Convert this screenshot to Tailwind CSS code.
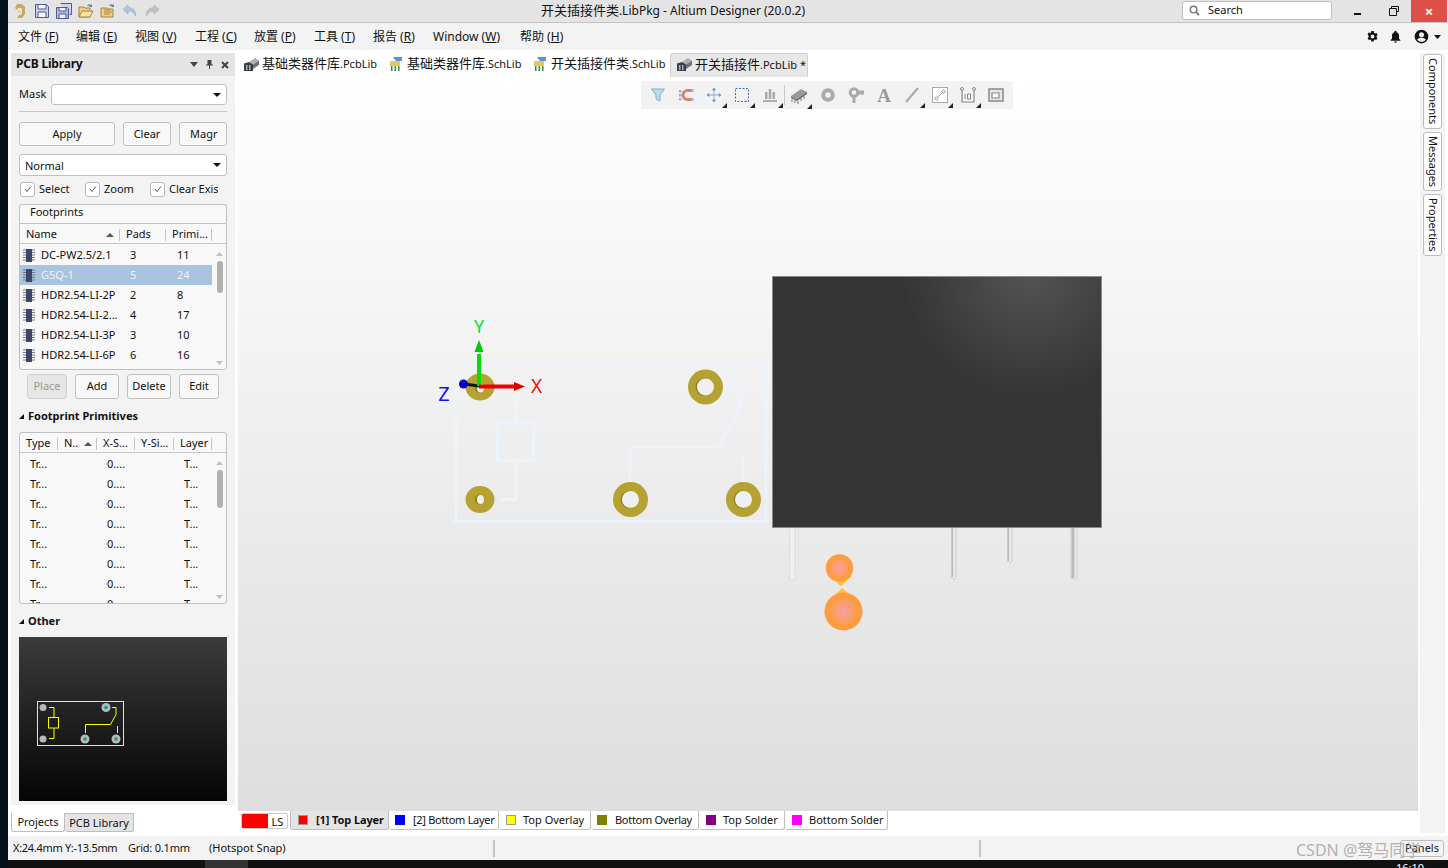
<!DOCTYPE html>
<html lang="en">
<head>
<meta charset="UTF-8">
<title>Altium Designer</title>
<script src="https://cdn.jsdelivr.net/npm/@tailwindcss/browser@4"></script>
</head>
<body class="flex h-[868px] w-[1448px] overflow-hidden bg-white text-[11px] text-[#111] font-['Noto_Sans','Noto_Sans_CJK_SC',sans-serif]">

<!-- dark strip -->
<div class="w-2 shrink-0 bg-[#04101c]"></div>

<div class="flex w-[1440px] flex-col">

  <!-- Title bar -->
  <div class="flex h-[23px] shrink-0 items-center border-b border-[#c4c4c4] bg-[#e4e4e4]">
    <div class="flex w-[200px] items-center gap-[6px] pl-1">
      <svg class="h-4 w-4" viewBox="0 0 16 16"><path d="M5 1h5l3 3v7l-3 4H5l2-3h2l1-2V6L9 5H6L5 7 3 5z" fill="#c9a765"/><path d="M6 7h3v3H6z" fill="#e6d6a8"/></svg>
      <svg class="h-4 w-4" viewBox="0 0 16 16"><path d="M1.500 1.500h11l2 2v11h-13z" fill="#cdd2e6" stroke="#4d5a94"/><path d="M4 2v4h8V2M4 14V9h8v5" fill="#f7f8fb" stroke="#4d5a94"/></svg>
      <svg class="h-4 w-4" viewBox="0 0 16 16"><path d="M4.500.5h11v11h-2" fill="#cfd4e6" stroke="#4d5a94"/><path d="M.5 4.500h11l1 1v10H.5z" fill="#b4bbd8" stroke="#4d5a94"/><path d="M3 5v3h7V5M3 15v-4h7v4" fill="#eef0f6" stroke="#4d5a94"/></svg>
      <svg class="h-4 w-4" viewBox="0 0 16 16"><path d="M1 4h5l1 1h5v9H1z" fill="#f0cf85" stroke="#a8843c"/><path d="M1 14l3-6h11l-3 6z" fill="#f8e2a8" stroke="#a8843c"/><path d="M9 3c1-2 3-2 4-1l1-1v3h-3l1-1c-1-.5-2-.5-3 0z" fill="#5b7fb5"/></svg>
      <svg class="h-4 w-4" viewBox="0 0 16 16"><path d="M1 5h6l1 1h5v8H1z" fill="#f0cf85" stroke="#a8843c"/><path d="M4 7h6M4 9h8M4 11h6" stroke="#a8843c"/><path d="M9 3c1-2 3-2 4-1l1-1v3h-3l1-1c-1-.5-2-.5-3 0z" fill="#5b7fb5"/></svg>
      <svg class="h-4 w-4" viewBox="0 0 16 16"><path d="M6 2L1 6.500 6 11V8c3 0 6 1 7.500 5 .5-5-2-8-7.500-8.500z" fill="#b4c6de" stroke="#8ba3c4" stroke-width=".6"/></svg>
      <svg class="h-4 w-4" viewBox="0 0 16 16"><path d="M10 2l5 4.500L10 11V8c-3 0-6 1-7.500 5C2 8 4.500 5 10 4.500z" fill="#c2c2c2" stroke="#a8a8a8" stroke-width=".6"/></svg>
    </div>
    <div class="ml-[330px] w-[270px] text-center text-[12px] whitespace-nowrap"><span class="text-[13px]">开关插接件类</span>.LibPkg - Altium Designer (20.0.2)</div>
    <div class="mb-[2px] ml-[374px] flex h-[19px] w-[150px] items-center rounded-[3px] border border-[#c0c0c0] bg-white pl-[6px]">
      <svg class="h-[11px] w-[11px]" viewBox="0 0 12 12"><circle cx="5" cy="5" r="3.600" fill="none" stroke="#777" stroke-width="1.600"/><path d="M8 8l3 3" stroke="#777" stroke-width="2"/></svg>
      <span class="ml-[8px]">Search</span>
    </div>
    <div class="flex h-full flex-1 items-center">
      <div class="ml-[22px] h-[2px] w-[7px] translate-y-[3px] bg-[#111]"></div>
      <svg class="ml-[28px] h-[10px] w-[10px]" viewBox="0 0 10 10"><path d="M2.500 2.500V.5h7v5h-2M.5 2.500h7v7h-7z" fill="none" stroke="#111"/></svg>
      <div class="ml-[12px] flex h-full w-9 items-center justify-center bg-[#e04f47] text-[15px] font-bold leading-none text-white">×</div>
    </div>
  </div>

  <!-- Menu bar -->
  <div class="flex h-[27px] shrink-0 items-center gap-[15px] bg-[#f3f3f3] pl-[10px] text-[12px] whitespace-nowrap">
    <span class="w-[43px]">文件 (<u>F</u>)</span>
    <span class="w-[44px]">编辑 (<u>E</u>)</span>
    <span class="w-[45px]">视图 (<u>V</u>)</span>
    <span class="w-[44px]">工程 (<u>C</u>)</span>
    <span class="w-[45px]">放置 (<u>P</u>)</span>
    <span class="w-[44px]">工具 (<u>T</u>)</span>
    <span class="w-[45px]">报告 (<u>R</u>)</span>
    <span class="w-[72px]">Window (<u>W</u>)</span>
    <span>帮助 (<u>H</u>)</span>
    <div class="ml-auto mr-[7px] flex items-center gap-[10px]">
      <svg class="h-[13px] w-[13px]" viewBox="0 0 24 24"><path fill="#111" d="M19.400 13a7.500 7.500 0 0 0 0-2l2.200-1.700-2.200-3.800-2.600 1a7.600 7.600 0 0 0-1.700-1L14.200 2H9.800l-.4 2.500a7.600 7.600 0 0 0-1.700 1l-2.600-1-2.200 3.800L5 11a7.500 7.500 0 0 0 0 2l-2.100 1.700 2.200 3.800 2.600-1a7.600 7.600 0 0 0 1.700 1l.4 2.500h4.400l.4-2.500a7.600 7.600 0 0 0 1.700-1l2.600 1 2.200-3.800zM12 15.500a3.500 3.500 0 1 1 0-7 3.500 3.500 0 0 1 0 7z"/></svg>
      <svg class="h-[13px] w-[13px]" viewBox="0 0 24 24"><path fill="#111" d="M12 1.500a2 2 0 0 0-2 2v.6C7 5 5.500 7.500 5.500 10.500V16L3 18.500V20h18v-1.500L18.500 16v-5.500c0-3-1.500-5.500-4.500-6.400v-.6a2 2 0 0 0-2-2zM9.500 21a2.500 2.500 0 0 0 5 0z"/></svg>
      <svg class="ml-[2px] h-[15px] w-[15px]" viewBox="0 0 24 24"><path fill="#111" fill-rule="evenodd" d="M12 1a11 11 0 1 0 0 22 11 11 0 0 0 0-22zm0 4a4 4 0 1 1 0 8 4 4 0 0 1 0-8zm0 15.500c-3 0-5.500-1.500-7-3.700 1.500-1.800 4.500-2.800 7-2.800s5.500 1 7 2.800c-1.500 2.200-4 3.700-7 3.700z"/></svg>
      <svg class="-ml-[5px] h-[4px] w-[7px]" viewBox="0 0 7 4"><path d="M0 0h7L3.500 4z" fill="#111"/></svg>
    </div>
  </div>

  <!-- Main -->
  <div class="flex h-[786px] shrink-0 bg-white">

    <!-- Left column -->
    <div class="flex w-[230px] shrink-0 flex-col pl-[3px] pt-[3px]">
      <div class="flex h-[752px] w-[224px] flex-col bg-[#f3f3f3]">
        <div class="flex h-[23px] shrink-0 items-center bg-[#e4e4e4] pl-[5px] pr-[6px]">
          <span class="pb-px text-[12px] font-bold tracking-[-.2px]">PCB Library</span>
          <svg class="ml-auto h-[5px] w-2" viewBox="0 0 8 5"><path d="M0 0h8L4 5z" fill="#444"/></svg>
          <svg class="ml-[8px] h-[9px] w-[7px]" viewBox="0 0 7 9"><path d="M1.500 0h4v4.500h1.500v1H4V9H3V5.500H0v-1h1.500z" fill="#444"/></svg>
          <svg class="ml-[8px] h-2 w-2" viewBox="0 0 8 8"><path d="M1 1l6 6M7 1L1 7" stroke="#444" stroke-width="2"/></svg>
        </div>

        <div class="flex flex-col px-2">
          <div class="mt-2 flex h-[21px] items-center">
            <span class="w-[32px]">Mask</span>
            <div class="flex h-full flex-1 items-center justify-end rounded-[3px] border border-[#c0c0c0] bg-white pr-[5px]">
              <svg class="h-[4px] w-2" viewBox="0 0 8 4"><path d="M0 0h8L4 4z" fill="#111"/></svg>
            </div>
          </div>
          <div class="mt-[6px] h-px bg-[#c8c8c8]"></div>
          <div class="mt-[10px] flex h-[24px] gap-2">
            <button class="w-[96px] rounded-[3px] border border-[#c0c0c0] bg-[#f8f8f8]">Apply</button>
            <button class="w-[48px] rounded-[3px] border border-[#c0c0c0] bg-[#f8f8f8]">Clear</button>
            <button class="w-[48px] overflow-hidden rounded-[3px] border border-[#c0c0c0] bg-[#f8f8f8] pl-[10px] text-left whitespace-nowrap">Magr</button>
          </div>
          <div class="mt-2 flex h-[22px] items-center justify-between rounded-[3px] border border-[#c0c0c0] bg-white pl-[5px] pr-[5px] pt-[2px]">
            <span>Normal</span>
            <svg class="h-[4px] w-2 -translate-y-px" viewBox="0 0 8 4"><path d="M0 0h8L4 4z" fill="#111"/></svg>
          </div>
          <div class="mt-[5px] flex h-4 items-center">
            <div class="ml-px flex h-[15px] w-[15px] items-center justify-center rounded-[3px] border border-[#b8b8b8] bg-white">
              <svg class="h-2 w-2" viewBox="0 0 8 8"><path d="M1 4l2 2.500L7 1.500" fill="none" stroke="#555"/></svg>
            </div>
            <span class="ml-[4px] w-[46px]">Select</span>
            <div class="flex h-[15px] w-[15px] items-center justify-center rounded-[3px] border border-[#b8b8b8] bg-white">
              <svg class="h-2 w-2" viewBox="0 0 8 8"><path d="M1 4l2 2.500L7 1.500" fill="none" stroke="#555"/></svg>
            </div>
            <span class="ml-[4px] w-[46px]">Zoom</span>
            <div class="flex h-[15px] w-[15px] items-center justify-center rounded-[3px] border border-[#b8b8b8] bg-white">
              <svg class="h-2 w-2" viewBox="0 0 8 8"><path d="M1 4l2 2.500L7 1.500" fill="none" stroke="#555"/></svg>
            </div>
            <span class="ml-[4px] w-[49px] overflow-hidden whitespace-nowrap">Clear Existing</span>
          </div>

          <!-- Footprints -->
          <div class="mt-[7px] flex h-[19px] items-center rounded-t-[3px] border border-b-0 border-[#c0c0c0] bg-[#f8f8f8] pb-[3px] pl-[10px]">Footprints</div>
          <div class="relative h-[147px] overflow-hidden rounded-b-[3px] border border-[#c0c0c0] bg-[#f8f8f8]">
            <div class="flex h-[20px] items-center border-b border-[#c8c8c8] pt-[2px]">
              <span class="ml-[6px] w-[80px]">Name</span>
              <svg class="h-[4px] w-2" viewBox="0 0 8 4"><path d="M0 4h8L4 0z" fill="#555"/></svg>
              <span class="ml-[5px] h-[12px] w-px bg-[#c4c4c4]"></span>
              <span class="ml-[6px] w-[39px]">Pads</span>
              <span class="h-[12px] w-px bg-[#c4c4c4]"></span>
              <span class="ml-[6px] w-[39px]">Primi...</span>
              <span class="h-[12px] w-px bg-[#c4c4c4]"></span>
            </div>
            <div class="flex flex-col pt-[1px]">
              <div class="flex h-[20px] w-[192px] items-center"><svg class="ml-[3px] h-[13px] w-[12px]" viewBox="0 0 12 13"><path d="M0 1h12M0 3.500h12M0 6h12M0 8.500h12M0 11h12" stroke="#778" stroke-width="1"/><rect x="3" y="0" width="6" height="13" fill="#3b4768"/></svg><span class="ml-[6px] w-[89px]">DC-PW2.5/2.1</span><span class="w-[47px]">3</span><span>11</span></div>
              <div class="flex h-[20px] w-[192px] items-center bg-[#a9c4e0] text-[#eef3f8]"><svg class="ml-[3px] h-[13px] w-[12px]" viewBox="0 0 12 13"><path d="M0 1h12M0 3.500h12M0 6h12M0 8.500h12M0 11h12" stroke="#778" stroke-width="1"/><rect x="3" y="0" width="6" height="13" fill="#3b4768"/></svg><span class="ml-[6px] w-[89px]">G5Q-1</span><span class="w-[47px]">5</span><span>24</span></div>
              <div class="flex h-[20px] w-[192px] items-center"><svg class="ml-[3px] h-[13px] w-[12px]" viewBox="0 0 12 13"><path d="M0 1h12M0 3.500h12M0 6h12M0 8.500h12M0 11h12" stroke="#778" stroke-width="1"/><rect x="3" y="0" width="6" height="13" fill="#3b4768"/></svg><span class="ml-[6px] w-[89px]">HDR2.54-LI-2P</span><span class="w-[47px]">2</span><span>8</span></div>
              <div class="flex h-[20px] w-[192px] items-center"><svg class="ml-[3px] h-[13px] w-[12px]" viewBox="0 0 12 13"><path d="M0 1h12M0 3.500h12M0 6h12M0 8.500h12M0 11h12" stroke="#778" stroke-width="1"/><rect x="3" y="0" width="6" height="13" fill="#3b4768"/></svg><span class="ml-[6px] w-[89px]">HDR2.54-LI-2...</span><span class="w-[47px]">4</span><span>17</span></div>
              <div class="flex h-[20px] w-[192px] items-center"><svg class="ml-[3px] h-[13px] w-[12px]" viewBox="0 0 12 13"><path d="M0 1h12M0 3.500h12M0 6h12M0 8.500h12M0 11h12" stroke="#778" stroke-width="1"/><rect x="3" y="0" width="6" height="13" fill="#3b4768"/></svg><span class="ml-[6px] w-[89px]">HDR2.54-LI-3P</span><span class="w-[47px]">3</span><span>10</span></div>
              <div class="flex h-[20px] w-[192px] items-center"><svg class="ml-[3px] h-[13px] w-[12px]" viewBox="0 0 12 13"><path d="M0 1h12M0 3.500h12M0 6h12M0 8.500h12M0 11h12" stroke="#778" stroke-width="1"/><rect x="3" y="0" width="6" height="13" fill="#3b4768"/></svg><span class="ml-[6px] w-[89px]">HDR2.54-LI-6P</span><span class="w-[47px]">6</span><span>16</span></div>
            </div>
            <!-- scrollbar -->
            <div class="absolute right-0 top-[21px] flex h-[124px] w-[13px] flex-col items-center">
              <svg class="mt-[7px] h-[4px] w-[7px]" viewBox="0 0 7 4"><path d="M0 4h7L3.500 0z" fill="#c0c0c0"/></svg>
              <div class="mt-[5px] h-[32px] w-[6px] rounded-[3px] bg-[#b0b0b0]"></div>
              <svg class="mt-auto mb-[4px] h-[4px] w-[7px]" viewBox="0 0 7 4"><path d="M0 0h7L3.500 4z" fill="#c0c0c0"/></svg>
            </div>
          </div>

          <div class="mt-[4px] flex h-[25px] gap-2 pl-2">
            <button class="w-[40px] rounded-[3px] border border-[#d0d0d0] bg-[#e6e6e6] text-[#999]">Place</button>
            <button class="w-[44px] rounded-[3px] border border-[#c0c0c0] bg-[#f8f8f8]">Add</button>
            <button class="w-[44px] rounded-[3px] border border-[#c0c0c0] bg-[#f8f8f8]">Delete</button>
            <button class="w-[40px] rounded-[3px] border border-[#c0c0c0] bg-[#f8f8f8]">Edit</button>
          </div>

          <div class="mt-[9px] flex h-[16px] items-center font-bold">
            <svg class="h-[5px] w-[5px]" viewBox="0 0 5 5"><path d="M5 0v5H0z" fill="#111"/></svg>
            <span class="ml-[4px]">Footprint Primitives</span>
          </div>

          <!-- Primitives -->
          <div class="relative mt-[8px] h-[172px] overflow-hidden rounded-[3px] border border-[#c0c0c0] bg-[#f8f8f8]">
            <div class="flex h-[20px] items-center border-b border-[#c8c8c8] pt-[2px]">
              <span class="ml-[6px] w-[31px]">Type</span>
              <span class="h-[12px] w-px bg-[#c4c4c4]"></span>
              <span class="ml-[6px] w-[18px]">N..</span>
              <svg class="ml-[2px] h-[4px] w-2" viewBox="0 0 8 4"><path d="M0 4h8L4 0z" fill="#555"/></svg>
              <span class="ml-[4px] h-[12px] w-px bg-[#c4c4c4]"></span>
              <span class="ml-[6px] w-[31px]">X-S...</span>
              <span class="h-[12px] w-px bg-[#c4c4c4]"></span>
              <span class="ml-[6px] w-[32px]">Y-Si...</span>
              <span class="h-[12px] w-px bg-[#c4c4c4]"></span>
              <span class="ml-[6px] w-[31px]">Layer</span>
              <span class="h-[12px] w-px bg-[#c4c4c4]"></span>
            </div>
            <div class="flex flex-col pt-[1px]">
              <div class="flex h-[20px] items-center pl-[10px]"><span class="w-[77px]">Tr...</span><span class="w-[77px]">0....</span><span>T...</span></div>
              <div class="flex h-[20px] items-center pl-[10px]"><span class="w-[77px]">Tr...</span><span class="w-[77px]">0....</span><span>T...</span></div>
              <div class="flex h-[20px] items-center pl-[10px]"><span class="w-[77px]">Tr...</span><span class="w-[77px]">0....</span><span>T...</span></div>
              <div class="flex h-[20px] items-center pl-[10px]"><span class="w-[77px]">Tr...</span><span class="w-[77px]">0....</span><span>T...</span></div>
              <div class="flex h-[20px] items-center pl-[10px]"><span class="w-[77px]">Tr...</span><span class="w-[77px]">0....</span><span>T...</span></div>
              <div class="flex h-[20px] items-center pl-[10px]"><span class="w-[77px]">Tr...</span><span class="w-[77px]">0....</span><span>T...</span></div>
              <div class="flex h-[20px] items-center pl-[10px]"><span class="w-[77px]">Tr...</span><span class="w-[77px]">0....</span><span>T...</span></div>
              <div class="flex h-[20px] items-center pl-[10px]"><span class="w-[77px]">Tr...</span><span class="w-[77px]">0....</span><span>T...</span></div>
            </div>
            <div class="absolute right-0 top-[21px] flex h-[149px] w-[13px] flex-col items-center">
              <svg class="mt-[7px] h-[4px] w-[7px]" viewBox="0 0 7 4"><path d="M0 4h7L3.500 0z" fill="#c0c0c0"/></svg>
              <div class="mt-[5px] h-[38px] w-[6px] rounded-[3px] bg-[#b0b0b0]"></div>
              <svg class="mt-auto mb-[4px] h-[4px] w-[7px]" viewBox="0 0 7 4"><path d="M0 0h7L3.500 4z" fill="#c0c0c0"/></svg>
            </div>
          </div>

          <div class="mt-[9px] flex h-[16px] items-center font-bold">
            <svg class="h-[5px] w-[5px]" viewBox="0 0 5 5"><path d="M5 0v5H0z" fill="#111"/></svg>
            <span class="ml-[4px]">Other</span>
          </div>

          <!-- Preview -->
          <svg class="mt-[8px] h-[164px] w-[208px]" viewBox="19 637 208 164">
            <defs><linearGradient id="pv" x1="0" y1="0" x2="0" y2="1"><stop offset="0" stop-color="#3b3b3b"/><stop offset="1" stop-color="#050505"/></linearGradient></defs>
            <rect x="19" y="637" width="208" height="164" fill="url(#pv)"/>
            <g fill="none" stroke="#ffff00" stroke-width="1">
              <rect x="37.500" y="701.500" width="86" height="44"/>
              <path d="M49 707.500h5v10M54 728v10.500h-5M112 707.500h4v7l-5.500 10H85.500v8.500M117.500 726v7"/>
              <rect x="48.500" y="717.500" width="10" height="10.500"/>
            </g>
            <g fill="#b8b8b8">
              <circle cx="43" cy="707.500" r="3.500"/><circle cx="43" cy="739" r="3.500"/>
              <circle cx="106" cy="707.500" r="4.500"/><circle cx="85" cy="739" r="4.500"/><circle cx="116" cy="739" r="4.500"/>
            </g>
            <g fill="#0a9a96"><circle cx="106" cy="707.500" r="1.800"/><circle cx="85" cy="739" r="1.800"/><circle cx="116" cy="739" r="1.800"/></g>
          </svg>
        </div>
      </div>

      <!-- Panel tabs -->
      <div class="mt-2 flex h-[19px]">
        <div class="flex w-[54px] items-center justify-center rounded-b-[3px] border border-[#bdbdbd] border-t-0 bg-white pt-[1px]">Projects</div>
        <div class="flex w-[69px] items-center justify-center rounded-b-[3px] border border-[#bdbdbd] border-l-0 bg-[#e4e4e4] pt-[1px]">PCB Library</div>
      </div>
    </div>

    <!-- Centre -->
    <div class="flex w-[1180px] shrink-0 flex-col">
      <!-- Document tabs -->
      <div class="flex h-[27px] shrink-0 items-end text-[13px] whitespace-nowrap">
        <div class="flex h-[24px] w-[145px] items-center pl-[5px] pb-[2px]">
          <svg class="h-[17px] w-[17px]" viewBox="0 0 17 17"><path d="M6 6l6-4 4 2.500-6 4z" fill="#aab3bd"/><path d="M10 8.500V13l6-4V4.500z" fill="#6b7580"/><path d="M1 7.500l5-1.500 4 2.500V15H1z" fill="#383f48"/><path d="M3 9h1.500v5H3zM6 9h1.500v5H6z" fill="#a8b0b8"/></svg>
          <span class="ml-[2px]">基础类器件库<span class="text-[11px]">.PcbLib</span></span>
        </div>
        <div class="flex h-[24px] w-[144px] items-center pl-[4px] pb-[2px]">
          <svg class="h-[17px] w-[17px]" viewBox="0 0 17 17"><path d="M6 1h9v4H9z" fill="#5d93d0"/><path d="M3 5h10v5H3z" fill="#e3c765"/><path d="M4 10h1.500v5H4zM7.500 10H9v5H7.500zM11 10h1.500v5H11z" fill="#3c8a3c"/></svg>
          <span class="ml-[3px]">基础类器件库<span class="text-[11px]">.SchLib</span></span>
        </div>
        <div class="flex h-[24px] w-[143px] items-center pl-[4px] pb-[2px]">
          <svg class="h-[17px] w-[17px]" viewBox="0 0 17 17"><path d="M6 1h9v4H9z" fill="#5d93d0"/><path d="M3 5h10v5H3z" fill="#e3c765"/><path d="M4 10h1.500v5H4zM7.500 10H9v5H7.500zM11 10h1.500v5H11z" fill="#3c8a3c"/></svg>
          <span class="ml-[3px]">开关插接件类<span class="text-[11px]">.SchLib</span></span>
        </div>
        <div class="flex h-[24px] w-[138px] items-center rounded-t-[3px] border border-b-0 border-[#d0d0d0] bg-[#e8e8e8] pl-[5px] pb-[2px]">
          <svg class="h-[17px] w-[17px]" viewBox="0 0 17 17"><path d="M6 6l6-4 4 2.500-6 4z" fill="#aab3bd"/><path d="M10 8.500V13l6-4V4.500z" fill="#6b7580"/><path d="M1 7.500l5-1.500 4 2.500V15H1z" fill="#383f48"/><path d="M3 9h1.500v5H3zM6 9h1.500v5H6z" fill="#a8b0b8"/></svg>
          <span class="ml-[2px]">开关插接件<span class="text-[11px]">.PcbLib *</span></span>
        </div>
      </div>

      <!-- 3D view -->
      <div class="relative h-[734px] shrink-0 bg-gradient-to-b from-white to-[#dedede]">
        <svg class="absolute inset-0 h-[734px] w-[1180px]" viewBox="238 77 1180 734">
          <defs>
            <radialGradient id="glow" gradientUnits="userSpaceOnUse" cx="1030" cy="270" r="130">
              <stop offset="0" stop-color="#545454"/><stop offset="1" stop-color="#343434"/>
            </radialGradient>
            <radialGradient id="blob"><stop offset="0" stop-color="#f5a0ac"/><stop offset=".8" stop-color="#ff9c3e"/></radialGradient>
          </defs>
          <!-- pins -->
          <g fill="#ebebeb" stroke="#c8c8c8" stroke-width=".8">
            <path d="M789.500 527h5.500v53h-5.500zM796 527h2.500v37H796z" fill="#efefef" stroke="#dadada"/>
            <path d="M951.500 527h4.500v50l-2 3-2.500-3z"/>
            <path d="M1007.500 527h4.500v34l-2 2.500-2.500-2.500z"/>
            <path d="M1071 527h6v51l-2 2-4-2z"/>
          </g>
          <path d="M952.500 527v50M1008.500 527v34" stroke="#bdbdbd" stroke-width="1.500"/>
          <path d="M1073 527v51" stroke="#bbbbbb" stroke-width="3"/>
          <!-- relay body -->
          <rect x="772.500" y="276.500" width="329" height="251" fill="url(#glow)" stroke="#8a8a8a"/>
          <!-- board outline + overlay -->
          <g fill="none" stroke="#edf3fa" stroke-width="3">
            <rect x="456" y="364" width="310" height="157.500"/>
            <rect x="497.500" y="423.500" width="36" height="37"/>
            <path d="M516 395v28M516 461v38.500h-15M724 387h16v22l-21 38h-89v35M743 455v27"/>
          </g>
          <!-- pads -->
          <g fill="#b5a233">
            <ellipse cx="480" cy="387" rx="14.500" ry="13.500"/>
            <circle cx="705.500" cy="387" r="17.500"/>
            <ellipse cx="480" cy="499.500" rx="14.500" ry="13.500"/>
            <circle cx="630.500" cy="499.500" r="17.500"/>
            <circle cx="743.500" cy="499.500" r="17.500"/>
          </g>
          <g fill="#8f8128">
            <ellipse cx="479.500" cy="388" rx="4.500" ry="5"/>
            <ellipse cx="479.500" cy="499.500" rx="4.500" ry="5"/>
            <circle cx="704.500" cy="387" r="9"/>
            <circle cx="629.500" cy="499.500" r="9"/>
            <circle cx="742.500" cy="499.500" r="9"/>
          </g>
          <g fill="#f0f0f0">
            <ellipse cx="480.500" cy="388" rx="3.500" ry="4.500"/>
            <ellipse cx="480.500" cy="499.500" rx="3.500" ry="4.500"/>
            <circle cx="705.500" cy="387" r="8.500"/>
            <circle cx="630.500" cy="499.500" r="8.500"/>
            <circle cx="743.500" cy="499.500" r="8.500"/>
          </g>
          <!-- axes -->
          <path d="M464 384l15 2" stroke="#111" stroke-width="3"/>
          <circle cx="463.500" cy="384" r="4.500" fill="#0000c8"/>
          <path d="M479 386v-32" stroke="#00e000" stroke-width="4"/>
          <path d="M479 340l-4.500 12h9z" fill="#00c800"/>
          <path d="M479 386.500h36" stroke="#ee0000" stroke-width="4"/>
          <path d="M525 386.500l-11-4.500v9z" fill="#dd0000"/>
          <text x="479" y="333" text-anchor="middle" font-size="18" fill="#00e040">Y</text>
          <text x="536.500" y="393" text-anchor="middle" font-size="19" fill="#ee1111">X</text>
          <text x="444" y="401" text-anchor="middle" font-size="20" fill="#1111ee">Z</text>
          <!-- orange pad -->
          <path d="M830 576l11 10.500 11-10.500z" fill="#ffc23a"/>
          <path d="M830 600l12-12 14 12z" fill="#ffc23a"/>
          <circle cx="839.500" cy="568" r="13.700" fill="url(#blob)"/>
          <circle cx="843.500" cy="611.500" r="19" fill="url(#blob)"/>
        </svg>

        <!-- Toolbar -->
        <div class="absolute left-[403px] top-[4px] flex h-[28px] w-[372px] items-center rounded-[2px] bg-[#f2f2f2] pl-[3px]">
          <div class="relative flex w-[28px] justify-center"><svg class="h-4 w-4" viewBox="0 0 16 16"><path d="M1.500 2h13L10 8v6l-4-2V8z" fill="#bcdcec" stroke="#7fb0cc"/></svg></div>
          <div class="relative flex w-[28px] justify-center"><svg class="h-4 w-4" viewBox="0 0 16 16"><path d="M15 3.500H9.500a4.500 4.500 0 0 0 0 9H15" fill="none" stroke="#dd7f70" stroke-width="3"/><path d="M13 2h2.500v3H13zM13 11h2.500v3H13z" fill="#8fb5cf"/><rect x="1" y="3" width="2.500" height="2.500" fill="#8fb5cf"/><rect x="1" y="7" width="2.500" height="2.500" fill="#8fb5cf"/><rect x="1" y="11" width="2.500" height="2.500" fill="#8fb5cf"/></svg></div>
          <div class="relative flex w-[28px] justify-center"><svg class="h-4 w-4" viewBox="0 0 16 16"><path d="M8 1v14M1 8h14M8 1L6.500 3h3zM8 15l-1.500-2h3zM1 8l2-1.500v3zM15 8l-2-1.500v3z" fill="#6f9bd6" stroke="#6f9bd6" stroke-width=".8"/></svg><span class="absolute bottom-[-5px] right-[1px] h-0 w-0 border-b-[5px] border-l-[5px] border-b-[#222] border-l-transparent"></span></div>
          <div class="relative flex w-[28px] justify-center"><svg class="h-4 w-4" viewBox="0 0 16 16"><rect x="1.500" y="1.500" width="13" height="13" fill="none" stroke="#4a6fc0" stroke-dasharray="2 1.500"/></svg><span class="absolute bottom-[-5px] right-[1px] h-0 w-0 border-b-[5px] border-l-[5px] border-b-[#222] border-l-transparent"></span></div>
          <div class="relative flex w-[28px] justify-center"><svg class="h-4 w-4" viewBox="0 0 16 16"><path d="M3 5h2.500v7H3zM6.800 2h2.500v10H6.800zM10.500 5H13v7h-2.500z" fill="#a8a8a8"/><path d="M1 14h14" stroke="#999" stroke-width="1.500"/></svg><span class="absolute bottom-[-5px] right-[1px] h-0 w-0 border-b-[5px] border-l-[5px] border-b-[#222] border-l-transparent"></span></div>
          <div class="h-[20px] w-px bg-[#c8c8c8]"></div>
          <div class="relative -ml-px flex w-[30px] justify-center"><svg class="h-[18px] w-[18px]" viewBox="0 0 18 18"><path d="M1 10l10-7 6 3-10 7z" fill="#999"/><path d="M1 10l6 3v2l-6-3z" fill="#777"/><path d="M7 13l10-7v2L7 15z" fill="#666"/><path d="M2 13v3M5 14v3M8 15v3M11 12v3M14 10v3" stroke="#777"/></svg><span class="absolute bottom-[-5px] right-[2px] h-0 w-0 border-b-[5px] border-l-[5px] border-b-[#222] border-l-transparent"></span></div>
          <div class="relative flex w-[28px] justify-center"><svg class="h-4 w-4" viewBox="0 0 16 16"><circle cx="8" cy="8" r="4.800" fill="none" stroke="#aaa" stroke-width="4"/></svg></div>
          <div class="relative flex w-[28px] justify-center"><svg class="h-[18px] w-[18px]" viewBox="0 0 18 18"><circle cx="7" cy="6.500" r="3.800" fill="none" stroke="#aaa" stroke-width="3"/><path d="M11 4.500h6v4h-6zM5.500 11h3v6h-3z" fill="#aaa"/></svg></div>
          <div class="relative flex w-[28px] justify-center font-['Liberation_Serif',serif] text-[19px] font-bold leading-none text-[#999]">A</div>
          <div class="relative flex w-[28px] justify-center"><svg class="h-4 w-4" viewBox="0 0 16 16"><path d="M2 15L14 1" stroke="#aaa" stroke-width="2.200"/></svg><span class="absolute bottom-[-5px] right-[1px] h-0 w-0 border-b-[5px] border-l-[5px] border-b-[#222] border-l-transparent"></span></div>
          <div class="relative flex w-[28px] justify-center"><svg class="h-4 w-4" viewBox="0 0 16 16"><rect x=".5" y=".5" width="15" height="15" fill="#fff" stroke="#aaa"/><circle cx="4.500" cy="11.500" r="1.500" fill="none" stroke="#999"/><circle cx="11.500" cy="4.500" r="1.500" fill="none" stroke="#999"/><path d="M5.500 10.500l5-5" stroke="#999"/></svg><span class="absolute bottom-[-5px] right-[1px] h-0 w-0 border-b-[5px] border-l-[5px] border-b-[#222] border-l-transparent"></span></div>
          <div class="relative flex w-[28px] justify-center"><svg class="h-4 w-4" viewBox="0 0 16 16"><circle cx="2" cy="2" r="1.500" fill="none" stroke="#888"/><circle cx="14" cy="2" r="1.500" fill="none" stroke="#888"/><path d="M2 3.500V15h12V3.500" fill="none" stroke="#888" stroke-width="1.200"/><path d="M5 7v5M7.500 7h3v5h-3z" fill="none" stroke="#888"/></svg><span class="absolute bottom-[-5px] right-[1px] h-0 w-0 border-b-[5px] border-l-[5px] border-b-[#222] border-l-transparent"></span></div>
          <div class="relative flex w-[28px] justify-center"><svg class="h-4 w-4" viewBox="0 0 16 16"><rect x="1" y="2" width="14" height="12" fill="#e6e6e6" stroke="#888" stroke-width="1.500"/><path d="M4 11V6h7v5z" fill="#fff" stroke="#888" stroke-width="1.200"/></svg></div>
        </div>
      </div>

      <!-- Layer tabs -->
      <div class="flex h-[25px] shrink-0 items-start whitespace-nowrap">
        <div class="ml-[3px] mt-[2px] flex h-[16px] w-[47px] overflow-hidden rounded-[2px] border border-[#c8c8c8]">
          <span class="w-[26px] bg-[#ff0000]"></span><span class="flex-1 text-center leading-[15px]">LS</span>
        </div>
        <div class="ml-[2px] flex h-[19px] w-[99px] items-center rounded-b-[3px] border border-t-0 border-[#c0c0c0] bg-[#e4e4e4] pl-[7px] pt-px font-bold">
          <span class="h-[10px] w-[10px] shrink-0 -translate-y-px border border-[#999] bg-[#ff0000]"></span><span class="ml-[8px] tracking-[-.1px]">[1] Top Layer</span>
        </div>
        <div class="flex h-[19px] w-[110px] items-center rounded-b-[3px] border border-l-0 border-t-0 border-[#c0c0c0] pl-[6px] pt-px">
          <span class="h-[10px] w-[10px] shrink-0 -translate-y-px bg-[#0000ff]"></span><span class="ml-[8px] tracking-[-.3px]">[2] Bottom Layer</span>
        </div>
        <div class="flex h-[19px] w-[92px] items-center rounded-b-[3px] border border-l-0 border-t-0 border-[#c0c0c0] pl-[7px] pt-px">
          <span class="h-[10px] w-[10px] shrink-0 -translate-y-px border border-[#999] bg-[#ffff00]"></span><span class="ml-[7px]">Top Overlay</span>
        </div>
        <div class="flex h-[19px] w-[108px] items-center rounded-b-[3px] border border-l-0 border-t-0 border-[#c0c0c0] pl-[6px] pt-px">
          <span class="h-[10px] w-[10px] shrink-0 -translate-y-px bg-[#808000]"></span><span class="ml-[8px] tracking-[-.3px]">Bottom Overlay</span>
        </div>
        <div class="flex h-[19px] w-[86px] items-center rounded-b-[3px] border border-l-0 border-t-0 border-[#c0c0c0] pl-[7px] pt-px">
          <span class="h-[10px] w-[10px] shrink-0 -translate-y-px bg-[#800080]"></span><span class="ml-[7px]">Top Solder</span>
        </div>
        <div class="flex h-[19px] w-[103px] items-center rounded-b-[3px] border border-l-0 border-t-0 border-[#c0c0c0] pl-[7px] pt-px">
          <span class="h-[10px] w-[10px] shrink-0 -translate-y-px bg-[#ff00ff]"></span><span class="ml-[7px]">Bottom Solder</span>
        </div>
      </div>
    </div>

    <!-- Right strip -->
    <div class="w-[30px] shrink-0 pt-[3px] pl-[2px]">
      <div class="flex h-[780px] w-[25px] flex-col gap-[3px] bg-[#f3f3f3] pl-[3px] pt-[1px]">
        <div class="flex h-[75px] w-[19px] items-center justify-center rounded-[3px] border border-[#bdbdbd] bg-white [writing-mode:vertical-rl]">Components</div>
        <div class="flex h-[59px] w-[19px] items-center justify-center rounded-[3px] border border-[#bdbdbd] bg-white [writing-mode:vertical-rl]">Messages</div>
        <div class="flex h-[62px] w-[19px] items-center justify-center rounded-[3px] border border-[#bdbdbd] bg-white [writing-mode:vertical-rl]">Properties</div>
      </div>
    </div>
  </div>

  <!-- Status bar -->
  <div class="relative flex h-[24px] shrink-0 items-center bg-[#f3f3f3] whitespace-nowrap">
    <span class="ml-[5px] w-[115px] tracking-[-.3px]">X:24.4mm Y:-13.5mm</span>
    <span class="w-[81px] tracking-[-.2px]">Grid: 0.1mm</span>
    <span class="w-[284px]">(Hotspot Snap)</span>
    <span class="h-[17px] w-[2px] bg-[#c4c4c4]"></span>
    <span class="ml-[484px] h-[17px] w-[2px] bg-[#c4c4c4]"></span>
    <div class="ml-[419px] flex h-[17px] w-[44px] items-center justify-center rounded-[3px] border border-[#bdbdbd]">Panels</div>
    <span class="absolute left-[1288px] top-[2px] text-[16px] text-[#a9a9a9]/90">CSDN @驽马同学</span>
  </div>

  <!-- Taskbar edge -->
  <div class="relative flex h-2 shrink-0 overflow-hidden bg-[#111]">
    <div class="ml-[197px] h-full w-[43px] bg-[#333]"></div>
    <span class="absolute left-[1388px] top-[1px] text-[11px] leading-[14px] text-white">16:10</span>
  </div>
</div>
</body>
</html>
